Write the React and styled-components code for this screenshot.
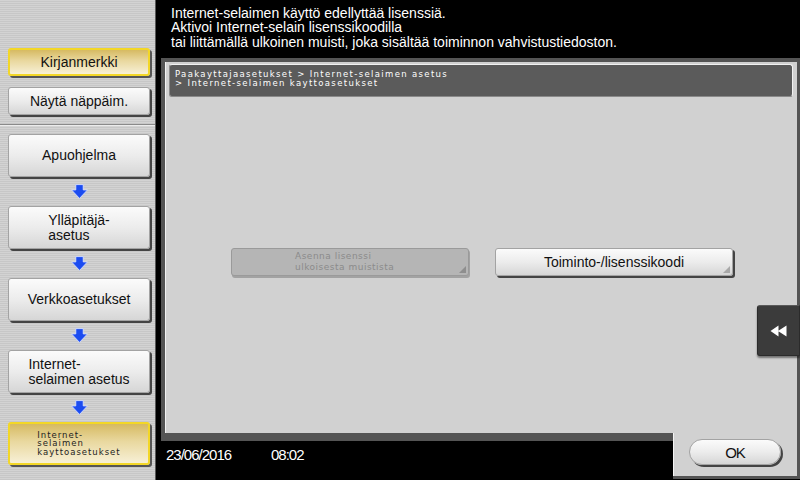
import React from "react";
import styled, { createGlobalStyle, css } from "styled-components";

const Global = createGlobalStyle`
  html, body { margin: 0; padding: 0; background: #000; }
  body { font-family: "Liberation Sans", Arial, sans-serif; }
  #root { width: 800px; height: 480px; }
`;

const Screen = styled.div`
  width: 800px;
  height: 480px;
  display: flex;
  overflow: hidden;
  background: #000;
`;

const Sidebar = styled.aside`
  width: 156px;
  flex: none;
  border-right: 1px solid #5a5a5a;
  background: repeating-linear-gradient(
    to bottom,
    #d3d3d3 0px,
    #d3d3d3 1px,
    #c7c7c7 1px,
    #c7c7c7 2px
  );
  display: flex;
  flex-direction: column;
  padding-top: 48px;
  box-sizing: border-box;
`;

const TopGroup = styled.div`
  display: flex;
  flex-direction: column;
  gap: 11px;
  padding-left: 8px;
`;

const buttonFace = css`
  background: linear-gradient(to bottom, #fbfbfb 0%, #ececec 50%, #d6d6d6 100%);
  border: 1px solid #a3a3a3;
  box-shadow: 2px 2px 0 #444;
`;

const goldFace = css`
  background: linear-gradient(to bottom, #d6ba62 0%, #e9d89f 45%, #f7f0d6 100%);
  border: 2px solid #f3d727;
  box-shadow: 2px 2px 0 #555;
`;

const SideButton = styled.div`
  width: 142px;
  height: 28px;
  box-sizing: border-box;
  border-radius: 3px;
  display: flex;
  align-items: center;
  justify-content: center;
  font-size: 14px;
  color: #111;
  ${(p) => (p.$gold ? goldFace : buttonFace)}
`;

const Divider = styled.div`
  margin-top: 9px;
  height: 1px;
  background: #8a8a8a;
  border-bottom: 1px solid #ececec;
`;

const NavList = styled.div`
  margin-top: 8px;
  padding-left: 8px;
  display: flex;
  flex-direction: column;
`;

const NavButton = styled.div`
  width: 142px;
  height: 43px;
  box-sizing: border-box;
  border-radius: 3px;
  display: flex;
  align-items: center;
  justify-content: center;
  color: #111;
  ${(p) => (p.$active ? goldFace : buttonFace)}
`;

const NavLabel = styled.span`
  display: inline-block;
  text-align: left;
  font-size: 14px;
  line-height: 15px;
`;

const SmallLabel = styled.span`
  display: inline-block;
  text-align: left;
  font-family: "DejaVu Sans", Verdana, sans-serif;
  font-size: 8.5px;
  letter-spacing: 1px;
  line-height: 8.5px;
  color: #222;
`;

const ArrowSlot = styled.div`
  width: 142px;
  height: 29px;
  display: flex;
  align-items: center;
  justify-content: center;
`;

const DownArrow = () => (
  <ArrowSlot>
    <svg width="17" height="15" viewBox="0 0 16 14">
      <path
        d="M4.5 0.5 H11.5 V5.5 H15.5 L8 13.5 L0.5 5.5 H4.5 Z"
        fill="#1c4cf0"
        stroke="#dfe6ff"
        strokeWidth="0.8"
      />
    </svg>
  </ArrowSlot>
);

const Main = styled.main`
  flex: 1;
  display: flex;
  flex-direction: column;
  min-width: 0;
`;

const Message = styled.div`
  height: 58px;
  box-sizing: border-box;
  padding: 5.5px 0 0 15px;
  color: #fff;
  font-size: 14px;
  line-height: 14.5px;
`;

const Panel = styled.section`
  position: relative;
  flex: 1;
  margin-left: 5px;
  border: 4px solid #545454;
  border-right-width: 3px;
  border-bottom: none;
  background: #d1d1d1;
  display: flex;
  flex-direction: column;
  box-shadow: inset 1px 0 0 #f2f2f2;
`;

const Breadcrumb = styled.div`
  margin: 2px 4px 0 4px;
  height: 33px;
  box-sizing: border-box;
  background: #5b5b5b;
  border: 1px solid #f2f2f2;
  border-left-color: #8a8a8a;
  border-bottom-color: #8a8a8a;
  border-radius: 3px;
  padding: 5px 0 0 5px;
  color: #fff;
  font-family: "DejaVu Sans", Verdana, sans-serif;
  font-size: 8.5px;
  letter-spacing: 1.35px;
  line-height: 8.5px;
`;

const Content = styled.div`
  flex: 1;
  display: flex;
  align-items: center;
  padding: 0 0 6px 66px;
`;

const ActionRow = styled.div`
  display: flex;
  gap: 26px;
`;

const ActionButton = styled.div`
  position: relative;
  width: 238px;
  height: 28px;
  box-sizing: border-box;
  border-radius: 3px;
  display: flex;
  align-items: center;
  ${(p) =>
    p.$disabled
      ? css`
          background: #b5b5b5;
          border: 1px solid #9a9a9a;
          box-shadow: 1px 2px 0 #a2a2a2;
          color: #8b8b8b;
          padding-left: 63px;
          font-family: "DejaVu Sans", Verdana, sans-serif;
          font-size: 9px;
          letter-spacing: 0.5px;
          line-height: 11px;
        `
      : css`
          ${buttonFace}
          justify-content: center;
          color: #111;
          font-size: 14px;
        `}
`;

const Corner = styled.span`
  position: absolute;
  right: 2px;
  bottom: 2px;
  width: 0;
  height: 0;
  border-left: 7px solid transparent;
  border-bottom: 7px solid ${(p) => (p.$dim ? "#8e8e8e" : "#a8a8a8")};
`;

const SideTab = styled.div`
  position: absolute;
  right: -3px;
  top: 243px;
  width: 43px;
  height: 51px;
  box-sizing: border-box;
  background: #3b3b3b;
  border: 1px solid #2b2b2b;
  border-top-color: #5a5a5a;
  border-radius: 3px 0 0 3px;
  box-shadow: 0 2px 2px rgba(0, 0, 0, 0.45);
  display: flex;
  align-items: center;
  justify-content: center;
`;

const Footer = styled.footer`
  height: 47px;
  margin-left: 5px;
  display: flex;
`;

const Status = styled.div`
  flex: 1;
  border-top: 8px solid #545454;
  background: #000;
  color: #fff;
  display: flex;
  align-items: flex-start;
  padding: 6px 0 0 5px;
  font-size: 15px;
  letter-spacing: -1px;
  line-height: 16px;
`;

const DateText = styled.span`
  width: 105px;
`;

const OkTab = styled.div`
  width: 108px;
  height: 37px;
  background: #d1d1d1;
  border-right: 3px solid #545454;
  border-bottom: 3px solid #545454;
  box-shadow: inset 1px 0 0 #f4f4f4;
  display: flex;
  align-items: flex-start;
  padding: 6px 0 0 16px;
`;

const OkButton = styled.div`
  width: 92px;
  height: 26px;
  box-sizing: border-box;
  border-radius: 13px;
  ${buttonFace}
  display: flex;
  align-items: center;
  justify-content: center;
  font-size: 15px;
  letter-spacing: -1px;
  color: #111;
`;

export default function App() {
  return (
    <>
      <Global />
      <Screen>
        <Sidebar>
          <TopGroup>
            <SideButton $gold>Kirjanmerkki</SideButton>
            <SideButton>Näytä näppäim.</SideButton>
          </TopGroup>
          <Divider />
          <NavList>
            <NavButton>
              <NavLabel>Apuohjelma</NavLabel>
            </NavButton>
            <DownArrow />
            <NavButton>
              <NavLabel>
                Ylläpitäjä-
                <br />
                asetus
              </NavLabel>
            </NavButton>
            <DownArrow />
            <NavButton>
              <NavLabel>Verkkoasetukset</NavLabel>
            </NavButton>
            <DownArrow />
            <NavButton>
              <NavLabel>
                Internet-
                <br />
                selaimen asetus
              </NavLabel>
            </NavButton>
            <DownArrow />
            <NavButton $active>
              <SmallLabel>
                Internet-
                <br />
                selaimen
                <br />
                kayttoasetukset
              </SmallLabel>
            </NavButton>
          </NavList>
        </Sidebar>
        <Main>
          <Message>
            Internet-selaimen käyttö edellyttää lisenssiä.
            <br />
            Aktivoi Internet-selain lisenssikoodilla
            <br />
            tai liittämällä ulkoinen muisti, joka sisältää toiminnon vahvistustiedoston.
          </Message>
          <Panel>
            <Breadcrumb>
              Paakayttajaasetukset &gt; Internet-selaimen asetus
              <br />
              &gt; Internet-selaimen kayttoasetukset
            </Breadcrumb>
            <Content>
              <ActionRow>
                <ActionButton $disabled>
                  <span>
                    Asenna lisenssi
                    <br />
                    ulkoisesta muistista
                  </span>
                  <Corner $dim />
                </ActionButton>
                <ActionButton>
                  Toiminto-/lisenssikoodi
                  <Corner />
                </ActionButton>
              </ActionRow>
            </Content>
            <SideTab>
              <svg width="18" height="12" viewBox="0 0 18 12">
                <path d="M0.5 6 L8.5 0.5 V11.5 Z M8 6 L16.5 0.5 V11.5 Z" fill="#fff" />
              </svg>
            </SideTab>
          </Panel>
          <Footer>
            <Status>
              <DateText>23/06/2016</DateText>
              <span>08:02</span>
            </Status>
            <OkTab>
              <OkButton>OK</OkButton>
            </OkTab>
          </Footer>
        </Main>
      </Screen>
    </>
  );
}
